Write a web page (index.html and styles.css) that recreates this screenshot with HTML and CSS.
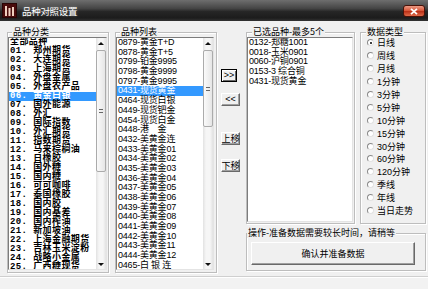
FILE: index.html
```html
<!DOCTYPE html>
<html lang="zh">
<head>
<meta charset="utf-8">
<title>品种对照设置</title>
<link rel="stylesheet" href="styles.css">
</head>
<body>
<div class="window">
  <div class="titlebar">
    <svg class="app-icon" viewBox="0 0 15 15" width="15" height="15">
      <rect x="0.5" y="0.5" width="14" height="14" fill="#4a0c0c" stroke="#2a0505"/>
      <rect x="3" y="3" width="2" height="10" fill="#f0d0c0"/>
      <rect x="6.5" y="5" width="2" height="8" fill="#f0d0c0"/>
      <rect x="10" y="4" width="2" height="9" fill="#f0d0c0"/>
    </svg>
    <span class="title">品种对照设置</span>
    <div class="close">
      <svg viewBox="0 0 8 7" width="8" height="7"><path d="M1 0.8 L7 6.2 M7 0.8 L1 6.2" stroke="#fff" stroke-width="1.8"/></svg>
    </div>
  </div>

  <div class="main">
    <div class="group g-cat">
      <span class="legend">品种分类</span>
      <div class="listbox">
        <div class="items bold">
          <div class="row">全部品种</div>
          <div class="row">01. 郑州期货</div>
          <div class="row">02. 大连期货</div>
          <div class="row">03. 上海期货</div>
          <div class="row">04. 外盘金属</div>
          <div class="row">05. 外盘农产品</div>
          <div class="row sel">06. 黄金白银</div>
          <div class="row">07. 国外能源</div>
          <div class="row">08. 外汇</div>
          <div class="row">09. 国际指数</div>
          <div class="row">10. 外汇期货</div>
          <div class="row">11. 指数期货</div>
          <div class="row">12. 马来棕榈油</div>
          <div class="row">13. 日橡胶</div>
          <div class="row">14. 国外糖</div>
          <div class="row">15. 国内糖</div>
          <div class="row">16. 可可咖啡</div>
          <div class="row">17. 泰国橡胶</div>
          <div class="row">18. 国内胶</div>
          <div class="row">19. 国内基差</div>
          <div class="row">20. 国内榨油</div>
          <div class="row">21. 新加坡油</div>
          <div class="row">22. 上海金融期货</div>
          <div class="row">23. 吉林玉米淀粉</div>
          <div class="row">24. 战略小金属</div>
          <div class="row">25. 广西糖现货</div>
        </div>
        <div class="sb">
          <div class="sb-btn"><span class="arrow-up"></span></div>
          <div class="sb-track"><div class="thumb" style="margin-top:2px;height:122px"><span class="grip"></span></div></div>
          <div class="sb-btn"><span class="arrow-down"></span></div>
        </div>
      </div>
    </div>

    <div class="group g-list">
      <span class="legend">品种列表</span>
      <div class="listbox">
        <div class="items normal">
          <div class="row">0879-黄金T+D</div>
          <div class="row">0878-黄金T+5</div>
          <div class="row">0799-铂金9995</div>
          <div class="row">0798-黄金9999</div>
          <div class="row">0797-黄金9995</div>
          <div class="row sel">0431-现货黄金</div>
          <div class="row">0464-现货白银</div>
          <div class="row">0449-现货钯金</div>
          <div class="row">0454-现货白金</div>
          <div class="row">0448-港　金</div>
          <div class="row">0432-美黄金连</div>
          <div class="row">0433-美黄金01</div>
          <div class="row">0434-美黄金02</div>
          <div class="row">0435-美黄金03</div>
          <div class="row">0436-美黄金04</div>
          <div class="row">0437-美黄金05</div>
          <div class="row">0438-美黄金06</div>
          <div class="row">0439-美黄金07</div>
          <div class="row">0440-美黄金08</div>
          <div class="row">0441-美黄金09</div>
          <div class="row">0442-美黄金10</div>
          <div class="row">0443-美黄金11</div>
          <div class="row">0444-美黄金12</div>
          <div class="row">0465-白 银 连</div>
        </div>
        <div class="sb">
          <div class="sb-btn"><span class="arrow-up"></span></div>
          <div class="sb-track"><div class="thumb" style="margin-top:2px;height:77px"><span class="grip"></span></div></div>
          <div class="sb-btn"><span class="arrow-down"></span></div>
        </div>
      </div>
    </div>

    <div class="movebtns">
      <div class="btn default b-add">&gt;&gt;</div>
      <div class="btn b-del">&lt;&lt;</div>
      <div class="btn b-up">上移</div>
      <div class="btn b-down">下移</div>
    </div>

    <div class="right">
      <div class="toprow">
        <div class="group g-sel">
          <span class="legend">已选品种-最多5个</span>
          <div class="listbox">
            <div class="items normal">
              <div class="row">0132-郑糖1001</div>
              <div class="row">0018-玉米0901</div>
              <div class="row">0060-沪铜0901</div>
              <div class="row">0153-3 综合铜</div>
              <div class="row">0431-现货黄金</div>
            </div>
          </div>
        </div>
        <div class="group g-type">
          <span class="legend">数据类型</span>
          <div class="radios">
            <div class="radio"><span class="dot on"></span>日线</div>
            <div class="radio"><span class="dot"></span>周线</div>
            <div class="radio"><span class="dot"></span>月线</div>
            <div class="radio"><span class="dot"></span>1分钟</div>
            <div class="radio"><span class="dot"></span>3分钟</div>
            <div class="radio"><span class="dot"></span>5分钟</div>
            <div class="radio"><span class="dot"></span>10分钟</div>
            <div class="radio"><span class="dot"></span>15分钟</div>
            <div class="radio"><span class="dot"></span>30分钟</div>
            <div class="radio"><span class="dot"></span>60分钟</div>
            <div class="radio"><span class="dot"></span>120分钟</div>
            <div class="radio"><span class="dot"></span>季线</div>
            <div class="radio"><span class="dot"></span>年线</div>
            <div class="radio"><span class="dot"></span>当日走势</div>
          </div>
        </div>
      </div>
      <div class="group g-op">
        <span class="legend">操作-准备数据需要较长时间，请稍等</span>
        <div class="btn opbtn">确认并准备数据</div>
      </div>
    </div>
  </div>

  <div class="status"></div>
</div>
</body>
</html>
```

FILE: styles.css
```css
* { box-sizing: border-box; margin: 0; padding: 0; }

body {
  width: 428px;
  height: 289px;
  overflow: hidden;
  font-family: "Liberation Sans", "Noto Sans CJK SC", sans-serif;
  font-size: 9px;
  color: #000;
  background: #f0f0f0;
}

.window {
  width: 428px;
  height: 289px;
  display: flex;
  flex-direction: column;
  background: #f0f0f0;
}

/* title bar */
.titlebar {
  height: 21px;
  flex: none;
  display: flex;
  align-items: center;
  padding-left: 2px;
  background: linear-gradient(#6e6e6e, #454545 40%, #262626 55%, #1c1c1c 85%, #333);
  color: #fff;
}
.app-icon { flex: none; display: block; }
.title {
  margin-left: 5px;
  font-family: "Noto Sans CJK SC", sans-serif;
  font-size: 9.5px;
  letter-spacing: -0.3px;
  text-shadow: 0 0 3px rgba(255, 255, 255, 0.35);
}
.close {
  margin-left: auto;
  margin-right: 3px;
  align-self: flex-start;
  margin-top: 5px;
  width: 22px;
  height: 12px;
  border-radius: 3px;
  border: 1px solid #4a1208;
  background: linear-gradient(#ec9a84, #d75437 48%, #b92e16 52%, #e06a48);
  display: flex;
  align-items: center;
  justify-content: center;
}
.close svg { display: block; }

/* main area */
.main {
  height: 255px;
  flex: none;
  display: flex;
  align-items: stretch;
  padding: 11px 2px 3px 7px;
}

.group {
  border: 1px solid #bdbdbd;
  box-shadow: inset 1px 1px 0 #fff, 1px 1px 0 #fff;
  display: flex;
  flex-direction: column;
}
.legend {
  align-self: flex-start;
  margin: -6px 0 0 4px;
  height: 10px;
  line-height: 10px;
  padding: 0 1px;
  background: #f0f0f0;
  font-family: "Noto Sans CJK SC", sans-serif;
  font-size: 9px;
  white-space: nowrap;
}

.g-cat { width: 102px; padding: 0 1px 2px 0; }
.g-list { width: 102px; margin-left: 6px; padding: 0 2px 2px 0; }

.listbox {
  flex: 1;
  min-height: 0;
  display: flex;
  border: 1px solid;
  border-color: #7c7c7c #e4e4e4 #e4e4e4 #7c7c7c;
  background: #fff;
}
.items {
  flex: 1;
  min-width: 0;
  overflow: hidden;
  background: #fff;
}
.row {
  white-space: nowrap;
  padding-left: 1px;
}
.items.bold .row {
  height: 9px;
  line-height: 9px;
  font-family: "Liberation Mono", "Noto Sans CJK SC", monospace;
  font-size: 9px;
  font-weight: 700;
  letter-spacing: 0.4px;
}
.items.normal .row {
  height: 9.7px;
  line-height: 9.7px;
  font-size: 9px;
  letter-spacing: -0.2px;
}
.row.sel { background: #3399ff; color: #fff; }

/* scrollbar */
.sb {
  width: 10px;
  flex: none;
  display: flex;
  flex-direction: column;
  background: linear-gradient(90deg, #e2e2e2, #f6f6f6 30%, #f6f6f6 70%, #e2e2e2);
}
.sb-btn {
  height: 10px;
  flex: none;
  display: flex;
  align-items: center;
  justify-content: center;
}
.arrow-up, .arrow-down {
  width: 0;
  height: 0;
  border-left: 3px solid transparent;
  border-right: 3px solid transparent;
}
.arrow-up { border-bottom: 3px solid #111; }
.arrow-down { border-top: 3px solid #111; }
.sb-track {
  flex: 1;
  display: flex;
  flex-direction: column;
}
.thumb {
  flex: none;
  border: 1px solid #ababab;
  border-radius: 2px;
  background: linear-gradient(90deg, #fafafa, #e6e6e6);
  display: flex;
  align-items: center;
  justify-content: center;
}
.grip {
  width: 4px;
  height: 4px;
  border-top: 1px solid #666;
  border-bottom: 1px solid #666;
}

/* move buttons */
.movebtns {
  width: 19px;
  flex: none;
  margin-left: 4px;
  display: flex;
  flex-direction: column;
  align-items: flex-start;
}
.btn {
  background: #f0f0f0;
  border: 1px solid;
  border-color: #fff #696969 #696969 #fff;
  box-shadow: inset -1px -1px 0 #a0a0a0;
  display: flex;
  align-items: center;
  justify-content: center;
  font-family: "Noto Sans CJK SC", sans-serif;
  font-size: 9px;
  line-height: 1;
  white-space: nowrap;
}
.btn.default {
  border-color: #000;
  box-shadow: inset 1px 1px 0 #fff, inset -1px -1px 0 #696969;
  font-family: "Liberation Sans", sans-serif;
}
.b-add { width: 16px; height: 13px; margin-top: 37px; }
.b-del { width: 19px; height: 13px; margin-top: 11px; font-family: "Liberation Sans", sans-serif; }
.b-up { width: 19px; height: 13px; margin-top: 26px; }
.b-down { width: 19px; height: 13px; margin-top: 14px; }

/* right side */
.right {
  width: 180px;
  flex: none;
  margin-left: 6px;
  display: flex;
  flex-direction: column;
}
.toprow {
  height: 192px;
  flex: none;
  display: flex;
  gap: 5px;
}
.g-sel { width: 109px; padding: 0 1px 1px 0; }
.g-sel .legend { margin-left: 5px; }
.g-type { width: 66px; }
.g-type .legend { margin-left: 5px; }

.radios {
  margin-top: -0.5px;
  padding-left: 6px;
}
.radio {
  height: 12.9px;
  display: flex;
  align-items: center;
  gap: 3px;
  font-size: 9px;
  white-space: nowrap;
}
.dot {
  width: 7px;
  height: 7px;
  flex: none;
  border-radius: 50%;
  border: 1px solid;
  border-color: #8a8a8a #e2e2e2 #e2e2e2 #8a8a8a;
  background: #fff;
  display: flex;
  align-items: center;
  justify-content: center;
}
.dot.on::after {
  content: "";
  width: 2px;
  height: 2px;
  border-radius: 50%;
  background: #000;
}

.g-op {
  margin-top: 9px;
  height: 38px;
  padding: 0 0 5px 4px;
}
.g-op .legend { margin-left: -4px; }
.opbtn {
  margin-top: 4px;
  width: 164px;
  height: 23px;
}

.status {
  flex: 1;
  border-top: 1px solid #cfcfcf;
  box-shadow: inset 0 1px 0 #fff;
  background: #f2f2f2;
}
```
